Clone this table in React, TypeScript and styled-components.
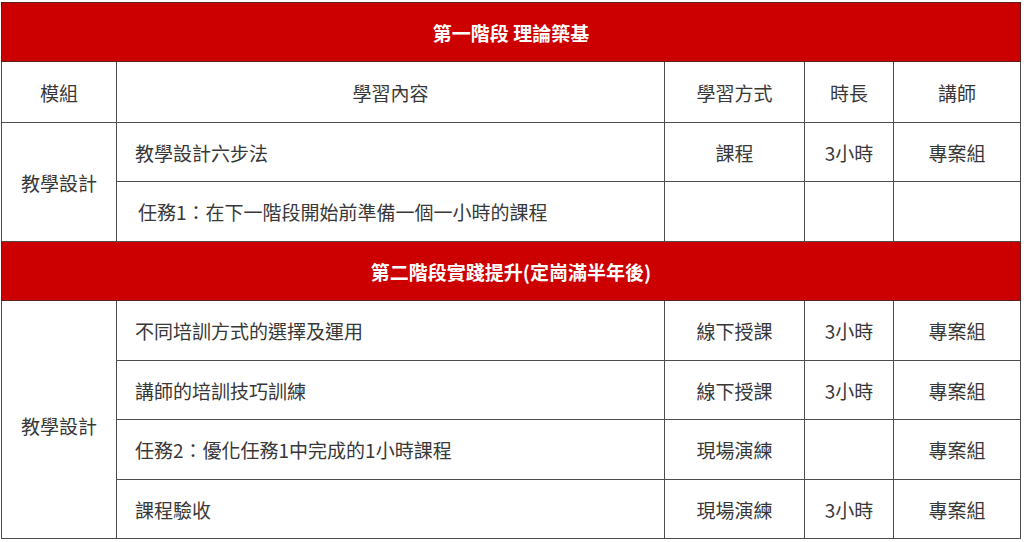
import React from "react";
import styled, { createGlobalStyle } from "styled-components";

const GlobalStyle = createGlobalStyle`
  html, body {
    margin: 0;
    padding: 0;
    background: #ffffff;
  }
  body {
    font-family: "Noto Sans CJK TC", "Noto Sans", sans-serif;
  }
`;

const Page = styled.div`
  padding: 2px 0 0 1px;
`;

const Table = styled.table`
  width: 1019px;
  border-collapse: collapse;
  table-layout: fixed;
  font-family: "Noto Sans CJK TC", "Noto Sans", sans-serif;
  font-size: 19px;
  color: #383838;
`;

const Row = styled.tr<{ $h: number }>`
  height: ${(p) => p.$h}px;
`;

const StageCell = styled.th`
  background: #cc0000;
  color: #ffffff;
  font-weight: 700;
  font-size: 19px;
  text-align: center;
  vertical-align: middle;
  border: 1px solid #5a2020;
  padding: 0;
`;

const HeadCell = styled.th`
  font-weight: 400;
  text-align: center;
  vertical-align: middle;
  border: 1px solid #4d4d4d;
  padding: 0;
`;

const Cell = styled.td<{ $align?: "left" | "center"; $inset?: number; $shift?: number }>`
  text-align: ${(p) => p.$align ?? "center"};
  vertical-align: middle;
  border: 1px solid #4d4d4d;
  padding: ${(p) => (p.$shift ? `${p.$shift}px` : "0")} 0 0 ${(p) => (p.$align === "left" ? `${p.$inset ?? 18}px` : "0")};
  white-space: nowrap;
`;

type Item = { content: string; method: string; hours: string; teacher: string; inset?: number };

const stage1: Item[] = [
  { content: "教學設計六步法", method: "課程", hours: "3小時", teacher: "專案組" },
  { content: "任務1：在下一階段開始前準備一個一小時的課程", method: "", hours: "", teacher: "", inset: 21 },
];

const stage2: Item[] = [
  { content: "不同培訓方式的選擇及運用", method: "線下授課", hours: "3小時", teacher: "專案組" },
  { content: "講師的培訓技巧訓練", method: "線下授課", hours: "3小時", teacher: "專案組" },
  { content: "任務2：優化任務1中完成的1小時課程", method: "現場演練", hours: "", teacher: "專案組" },
  { content: "課程驗收", method: "現場演練", hours: "3小時", teacher: "專案組" },
];

const heights1 = [59, 60];
const heights2 = [60, 59, 60, 59];

function Stage({ items, heights, module }: { items: Item[]; heights: number[]; module: string }) {
  return (
    <>
      {items.map((it, i) => (
        <Row key={i} $h={heights[i]}>
          {i === 0 && (
            <Cell rowSpan={items.length} $shift={items.length > 2 ? 12 : 0}>
              {module}
            </Cell>
          )}
          <Cell $align="left" $inset={it.inset}>
            {it.content}
          </Cell>
          <Cell>{it.method}</Cell>
          <Cell>{it.hours}</Cell>
          <Cell>{it.teacher}</Cell>
        </Row>
      ))}
    </>
  );
}

export default function App() {
  return (
    <Page>
      <GlobalStyle />
      <Table>
        <colgroup>
          <col style={{ width: 115 }} />
          <col style={{ width: 548 }} />
          <col style={{ width: 140 }} />
          <col style={{ width: 89 }} />
          <col style={{ width: 127 }} />
        </colgroup>
        <tbody>
          <Row $h={59}>
            <StageCell colSpan={5}>第一階段 理論築基</StageCell>
          </Row>
          <Row $h={61}>
            <HeadCell>模組</HeadCell>
            <HeadCell>學習內容</HeadCell>
            <HeadCell>學習方式</HeadCell>
            <HeadCell>時長</HeadCell>
            <HeadCell>講師</HeadCell>
          </Row>
          <Stage items={stage1} heights={heights1} module="教學設計" />
          <Row $h={59}>
            <StageCell colSpan={5}>第二階段實踐提升(定崗滿半年後)</StageCell>
          </Row>
          <Stage items={stage2} heights={heights2} module="教學設計" />
        </tbody>
      </Table>
    </Page>
  );
}
